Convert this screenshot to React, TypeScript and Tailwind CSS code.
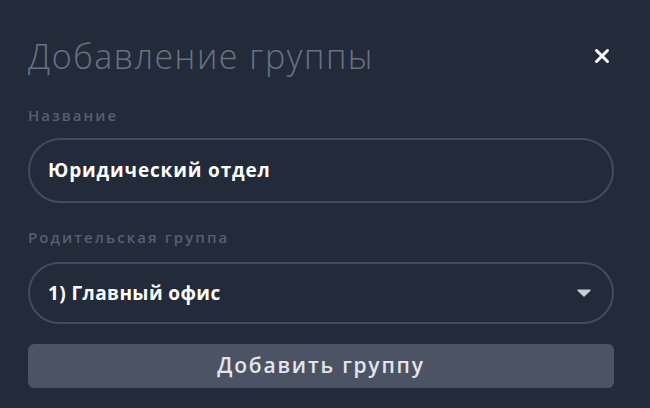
import { X } from 'lucide-react'

export default function App() {
  return (
    <div className="w-[650px] h-[408px] bg-[#232a39] pl-[28px] pr-[36px] pt-[36px] font-['Open_Sans','Liberation_Sans',sans-serif]">
      {/* Header */}
      <div className="flex items-center justify-between h-[40px]">
        <h1 className="text-[34px] font-light text-[#687284] tracking-[1.5px]">Добавление группы</h1>
        <button className="text-white pr-[1px]">
          <X size={22} strokeWidth={3.2} />
        </button>
      </div>

      {/* Name */}
      <div className="mt-[29px] h-[20px] leading-[20px] text-[15px] font-semibold text-[#566074] tracking-[2px]">Название</div>
      <div className="mt-[13px] h-[65px] rounded-full border-2 border-[#434c5c] flex items-center pl-[18px]">
        <span className="text-[19px] font-bold text-white tracking-[0.85px]">Юридический отдел</span>
      </div>

      {/* Parent group */}
      <div className="mt-[24px] h-[20px] leading-[20px] text-[15px] font-semibold text-[#566074] tracking-[2.1px]">Родительская группа</div>
      <div className="mt-[15px] h-[62px] rounded-full border-2 border-[#434c5c] flex items-center justify-between pl-[18px] pr-[21px]">
        <span className="text-[19px] font-bold text-white tracking-[0.4px]">1) Главный офис</span>
        <svg width="14" height="8" viewBox="0 0 14 8">
          <path d="M1 1.2 L13 1.2 L7 7 Z" fill="#c9cdd5" stroke="#c9cdd5" strokeWidth="1.4" strokeLinejoin="round" />
        </svg>
      </div>

      {/* Submit */}
      <button className="mt-[20px] w-full h-[44px] rounded-[6px] bg-[#4b5365] text-[21px] font-semibold text-[#e3e5ea] tracking-[1.8px]">
        Добавить группу
      </button>
    </div>
  )
}
